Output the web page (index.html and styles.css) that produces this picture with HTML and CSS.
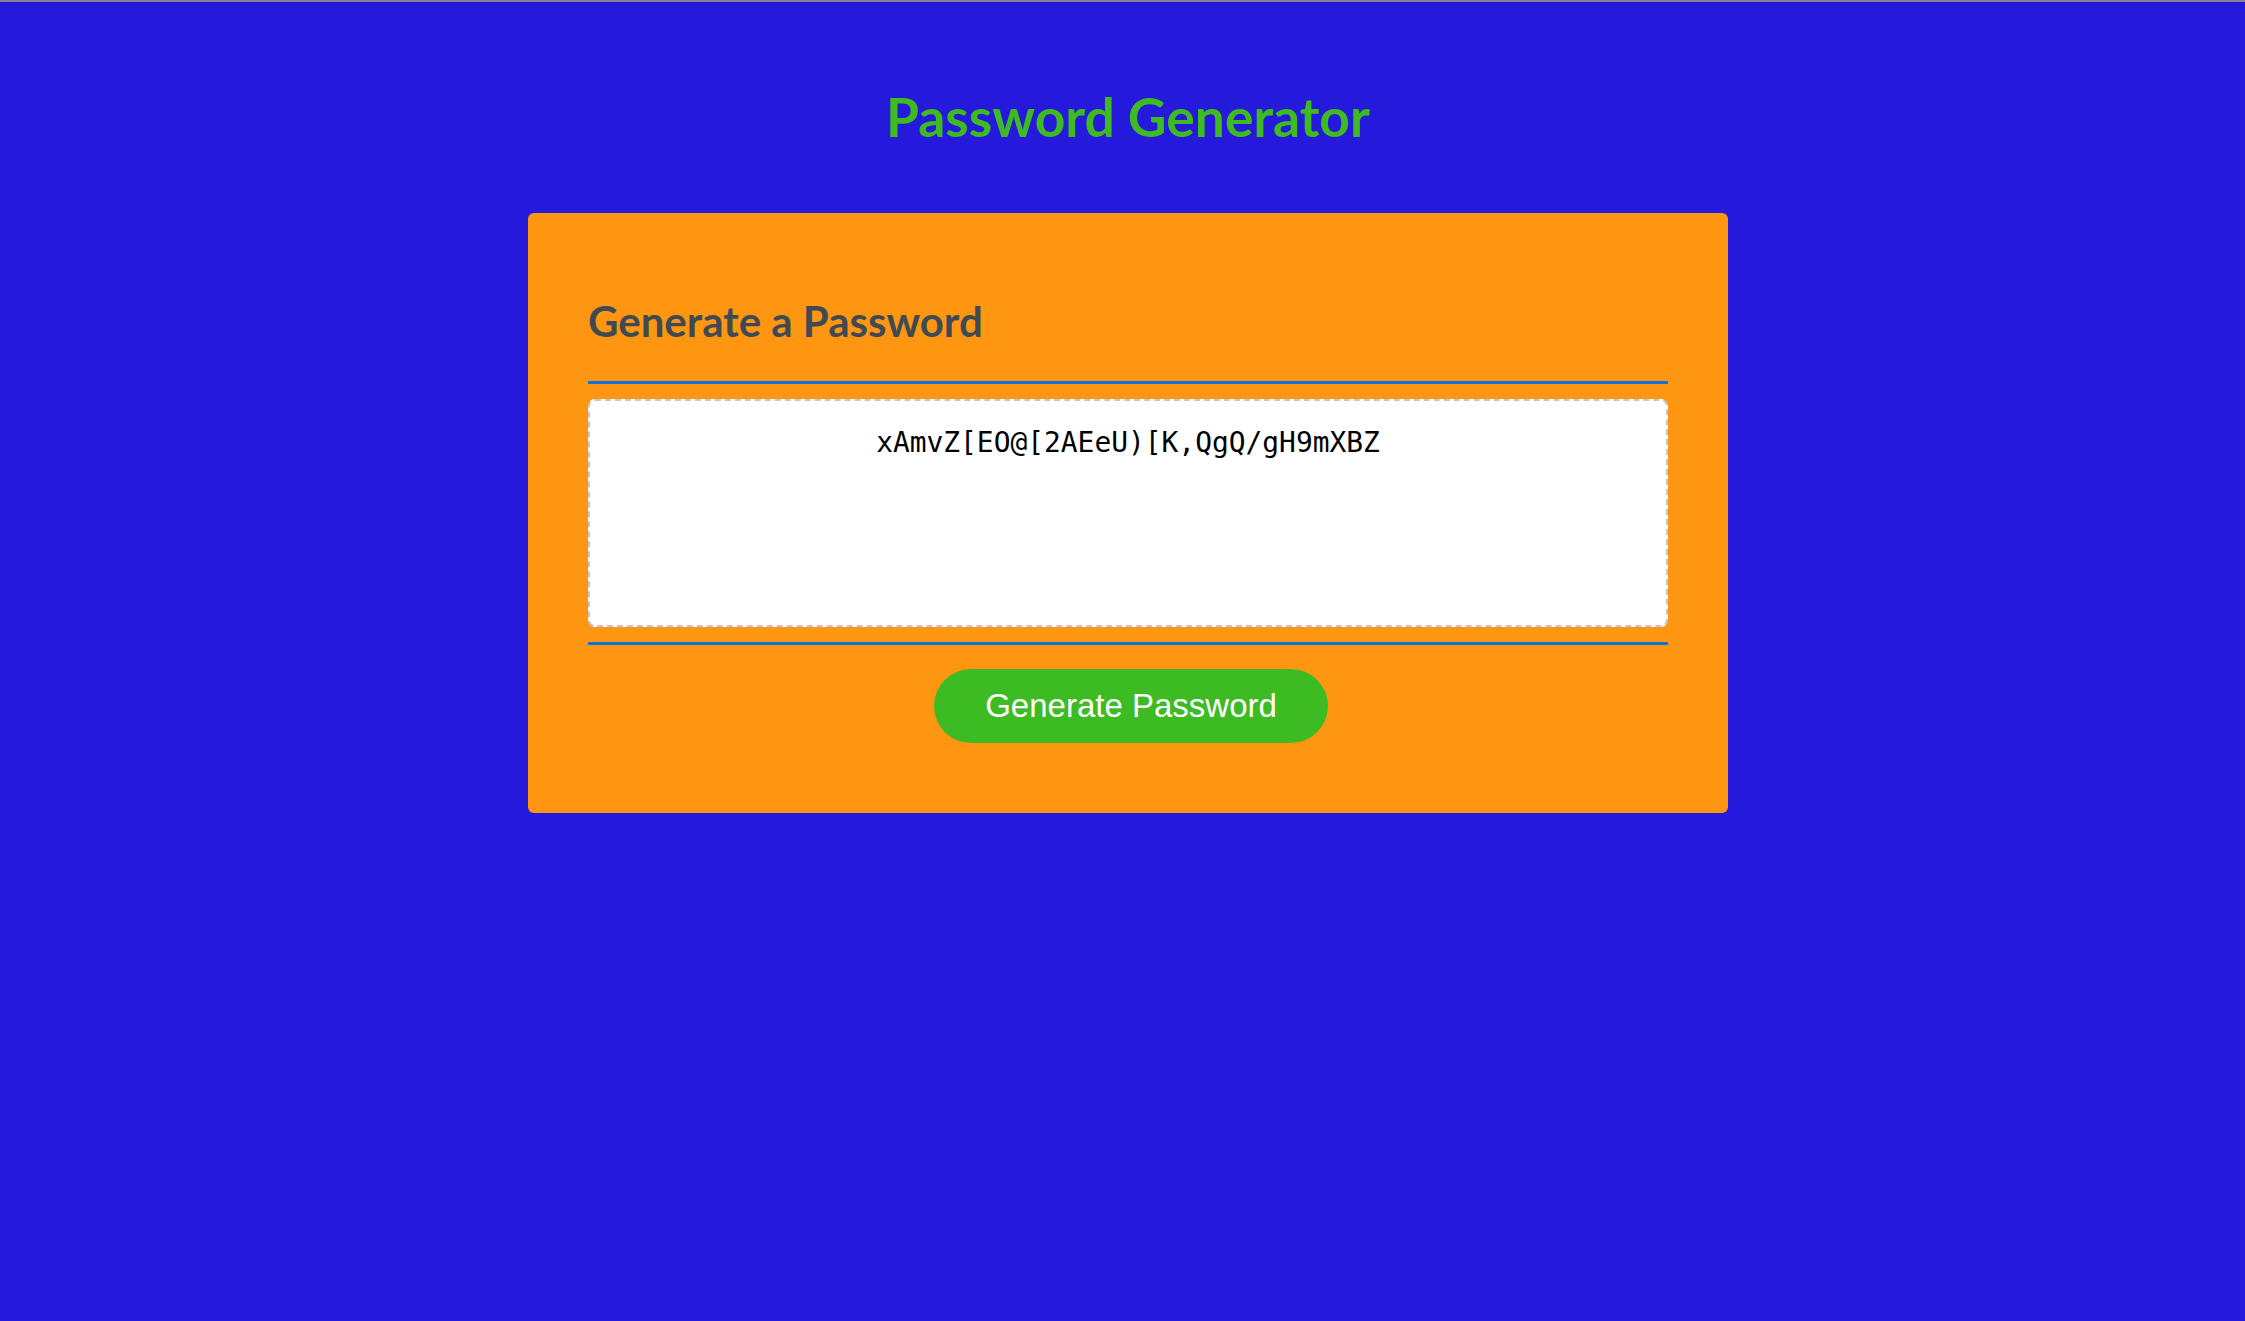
FILE: index.html
```html
<!DOCTYPE html>
<html lang="en">
<head>
<meta charset="utf-8">
<title>Password Generator</title>
<link rel="stylesheet" href="styles.css">
</head>
<body>
<div class="topline"></div>
<div class="wrapper">
  <header class="page-header">
    <h1 class="title">Password Generator</h1>
  </header>
  <div class="card">
    <div class="card-header">
      <h2 class="card-title">Generate a Password</h2>
    </div>
    <div class="card-body">
      <textarea class="password" readonly>xAmvZ[EO@[2AEeU)[K,QgQ/gH9mXBZ</textarea>
    </div>
    <div class="card-footer">
      <button class="btn" type="button">Generate Password</button>
    </div>
  </div>
</div>
</body>
</html>
```

FILE: styles.css
```css
* { box-sizing: border-box; }

html, body {
  margin: 0;
  padding: 0;
  height: 100%;
}

body {
  background: #2519db;
  font-family: "Lato", "Open Sans", sans-serif;
}

.topline {
  height: 2px;
  background: #8c7e98;
}

.wrapper {
  display: flex;
  flex-direction: column;
  align-items: center;
  padding-left: 11px;
}

.page-header {
  padding-top: 84px;
}

.title {
  margin: 0;
  color: #3dbb21;
  font-weight: 700;
  font-size: 53.4px;
  line-height: 60px;
}

.card {
  margin-top: 67px;
  width: 1200px;
  background: #ff9612;
  border-radius: 6px;
  padding: 0 60px 70px;
}

.card-header {
  padding-top: 84px;
  padding-bottom: 36px;
  border-bottom: 3px solid #0a73dc;
}

.card-title {
  margin: 0;
  color: #3f4a54;
  font-weight: 700;
  font-size: 42px;
  line-height: 48px;
}

.card-body {
  padding: 15px 0;
  border-bottom: 3px solid #0a73dc;
}

.password {
  display: block;
  width: 100%;
  height: 228px;
  resize: none;
  border: 2px dashed #c4c6cc;
  border-radius: 7px;
  background: #ffffff;
  color: #000;
  font-family: "DejaVu Sans Mono", "Liberation Mono", monospace;
  font-size: 27.9px;
  text-align: center;
  padding: 25px 10px;
  outline: none;
}

.card-footer {
  display: flex;
  justify-content: center;
  padding-top: 24px;
}

.btn {
  margin-left: 6px;
  border: none;
  background: #3dbb22;
  color: #ffffff;
  font-family: "Liberation Sans", Arial, sans-serif;
  font-size: 33px;
  line-height: 38px;
  padding: 18px 51px;
  border-radius: 40px;
  cursor: pointer;
}
```
